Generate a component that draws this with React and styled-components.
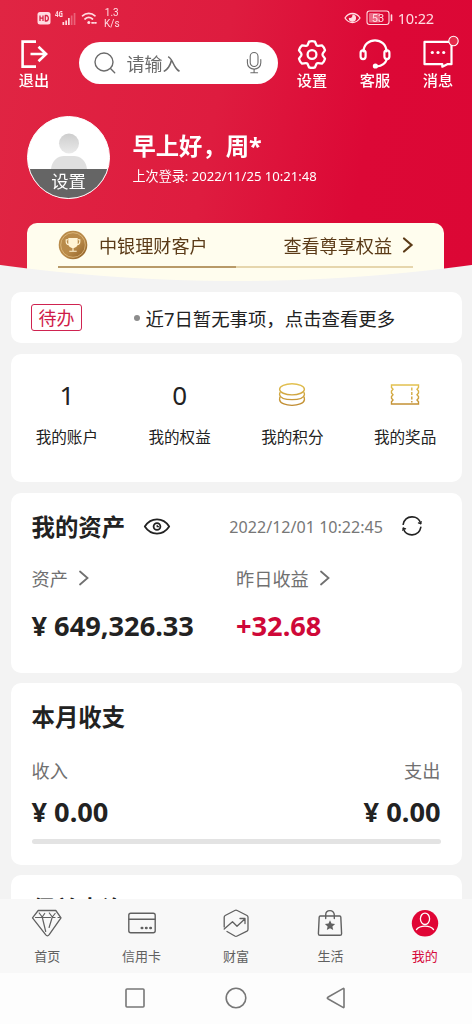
import React from "react";
import styled, { createGlobalStyle } from "styled-components";

const GlobalStyle = createGlobalStyle`
  * {
    box-sizing: border-box;
  }

  body {
    margin: 0;
    background-color: #f3f3f3;
    font-family: "Noto Sans", "Noto Sans CJK SC", sans-serif;
    color: #222;
  }

  svg {
    display: block;
    flex-shrink: 0;
    overflow: visible;
  }
`;

const Screen = styled.div`
  display: flex;
  flex-direction: column;
  width: 472px;
  height: 1024px;
  overflow: hidden;
  white-space: nowrap;
`;

const Header = styled.header`
  flex-shrink: 0;
  height: 281px;
  background: linear-gradient(100deg, #e02543 0%, #de1c3f 45%, #dc0836 75%, #dc0735 100%);
  mask-image: radial-gradient(circle 1740px at 50% -1459px, #000 1739.5px, transparent 1740.5px);
  color: #fff;
`;

const StatusBar = styled.div`
  display: flex;
  align-items: center;
  justify-content: space-between;
  height: 36px;
  padding: 0 38px 0 37px;
  color: #ffdce2;
`;

const StatusGroup = styled.div`
  display: flex;
  align-items: center;
  gap: ${({ $gap }) => $gap}px;
`;

const Speed = styled.div`
  margin-left: 2px;
  font-family: Roboto, sans-serif;
  font-size: 10px;
  line-height: 11.5px;
  text-align: center;
`;

const Clock = styled.span`
  font-size: 14.6px;
  letter-spacing: -0.2px;
`;

const Toolbar = styled.div`
  display: flex;
  height: 55px;
`;

const ToolButton = styled.div`
  display: flex;
  flex-direction: column;
  align-items: center;
  width: ${({ $width }) => $width || 63}px;
  padding-top: 1px;
  font-size: 15.2px;
  font-weight: 500;
  line-height: 22px;
`;

const SearchBox = styled.div`
  display: flex;
  align-items: center;
  width: 199px;
  height: 42px;
  margin: 6px 2.5px 0 11px;
  padding: 0 15px;
  border-radius: 21px;
  background-color: #fff;
  color: #6b6b6b;
  font-size: 18px;
`;

const Placeholder = styled.span`
  flex: 1;
  margin-left: 10.5px;
`;

const Profile = styled.div`
  display: flex;
  height: 83px;
  margin: 25px 0 24px 27px;
`;

const Avatar = styled.div`
  display: flex;
  flex-direction: column;
  align-items: center;
  justify-content: flex-end;
  width: 83px;
  height: 83px;
  overflow: hidden;
  border: 1px solid #fff;
  border-radius: 50%;
  background-color: #fff;
`;

const AvatarLabel = styled.div`
  width: 100%;
  height: 29px;
  background-color: #656565;
  font-size: 17.3px;
  line-height: 25px;
  text-align: center;
`;

const Greeting = styled.div`
  padding: 14px 0 0 22.5px;
`;

const Hello = styled.div`
  font-size: 23.3px;
  font-weight: 700;
  line-height: 32px;
`;

const LastLogin = styled.div`
  margin-top: 4px;
  font-size: 13.1px;
  line-height: 20px;
`;

const VipCard = styled.div`
  height: 70px;
  margin: 0 28px 0 27px;
  padding: 0 31px;
  border-radius: 10px 10px 0 0;
  background-color: #fffdee;
  color: #5b3b18;
  font-size: 18.1px;
`;

const VipRow = styled.div`
  display: flex;
  align-items: center;
  height: 43px;
`;

const VipName = styled.span`
  flex: 1;
  margin-left: 11px;
`;

const VipMore = styled.span`
  margin-right: 10px;
`;

const VipProgress = styled.div`
  height: 2px;
  background-color: #e6d6ad;
`;

const VipProgressFill = styled.div`
  width: 178px;
  height: 2px;
  background-color: #b89a68;
`;

const Content = styled.main`
  display: flex;
  flex: 1;
  flex-direction: column;
  gap: 10.5px;
  min-height: 0;
  overflow: hidden;
  padding: 11px 10.5px 0;
`;

const Card = styled.section`
  flex-shrink: 0;
  height: ${({ $height }) => $height}px;
  padding: ${({ $top }) => $top || 0}px 21px 0;
  border-radius: 10px;
  background-color: #fff;
`;

const TodoCard = styled(Card)`
  display: flex;
  align-items: center;
  font-size: 18.4px;
`;

const TodoTag = styled.span`
  width: 51px;
  height: 27px;
  margin: 0 51.5px 0 -0.5px;
  border: 1px solid #cf2350;
  border-radius: 3px;
  color: #cf1b4a;
  font-size: 18px;
  line-height: 26px;
  text-align: center;
`;

const Bullet = styled.span`
  width: 6px;
  height: 6px;
  margin-right: 6px;
  border-radius: 50%;
  background-color: #8c8c8c;
`;

const StatsCard = styled(Card)`
  display: grid;
  grid-template-columns: repeat(4, 1fr);
  padding: 21px 0 0;
`;

const Stat = styled.div`
  display: flex;
  flex-direction: column;
  align-items: center;
`;

const StatValue = styled.div`
  display: flex;
  align-items: center;
  height: 40px;
  font-size: 26px;
`;

const StatLabel = styled.div`
  margin-top: 11px;
  font-size: 15.6px;
  line-height: 22px;
`;

const TitleRow = styled.div`
  display: flex;
  align-items: center;
  height: 34px;
`;

const Title = styled.h2`
  margin: 0 18px 0 0;
  font-size: 23.4px;
  font-weight: 700;
  line-height: 34px;
`;

const UpdatedAt = styled.span`
  margin: 0 18.5px 0 auto;
  color: #777;
  font-size: 16.1px;
`;

const Refresh = styled.span`
  margin: 0 19px 1px 0;
`;

const Columns = styled.div`
  display: grid;
  grid-template-columns: 204.5px 1fr;
  row-gap: 17px;
  margin-top: 21px;
`;

const Label = styled.div`
  display: flex;
  align-items: center;
  gap: 10px;
  height: 26px;
  color: #707070;
  font-size: 18.2px;
`;

const Amount = styled.div`
  height: 36px;
  color: ${({ $gain }) => ($gain ? "#cf0838" : "#222")};
  font-size: 27.2px;
  font-weight: 700;
  line-height: 36px;
`;

const Between = styled.div`
  display: flex;
  justify-content: space-between;
  margin-top: ${({ $top }) => $top}px;
`;

const FlowBar = styled.div`
  height: 5px;
  margin-top: 9px;
  border-radius: 3px;
  background-color: #e3e3e3;
`;

const TabBar = styled.nav`
  display: grid;
  flex-shrink: 0;
  grid-template-columns: repeat(5, 1fr);
  height: 74px;
  background-color: #f8f8f8;
`;

const Tab = styled.div`
  display: flex;
  flex-direction: column;
  align-items: center;
  padding-top: 8px;
  color: ${({ $active }) => ($active ? "#d60a3b" : "#606060")};
  font-size: 13px;
  line-height: 20px;

  svg {
    margin-bottom: 7px;
  }
`;

const SystemNav = styled.div`
  display: flex;
  flex-shrink: 0;
  align-items: center;
  justify-content: center;
  gap: 78.5px;
  height: 51px;
  padding: 0 1px 2px 0;
  background-color: #fdfdfd;
  color: #777;
`;

const Icon = ({ width = 32, height = width, stroke = 2, children }) => (
    <svg
        width={width}
        height={height}
        viewBox={`0 0 ${width} ${height}`}
        fill="none"
        stroke="currentColor"
        strokeWidth={stroke}
        strokeLinecap="round"
        strokeLinejoin="round"
    >
        {children}
    </svg>
);

const Chevron = ({ stroke = 1.8 }) => (
    <Icon width={11} height={16} stroke={stroke}>
        <path d="M2 1.5 9.5 8 2 14.5" strokeLinejoin="miter" />
    </Icon>
);

const HdIcon = () => (
    <Icon width={14} height={14} stroke={1.3}>
        <rect x="0.5" y="1" width="13" height="12.5" rx="2.5" fill="currentColor" stroke="none" />
        <path
            d="M3 4.5v5.5M6 4.5v5.5M3 7.2h3M8.3 4.5v5.5h.8c3 0 3-5.5 0-5.5z"
            stroke="#d92345"
            strokeLinecap="butt"
        />
    </Icon>
);

const SignalIcon = () => (
    <svg width="22" height="16" viewBox="0 0 22 16" fill="currentColor">
        <text x="0" y="7" fontSize="8" fontWeight="700" textLength="8" lengthAdjust="spacingAndGlyphs">
            4G
        </text>
        <rect x="7.5" y="12" width="1.7" height="3" />
        <rect x="10.3" y="10.5" width="1.7" height="4.5" />
        <rect x="13" y="8" width="1.7" height="7" />
        <rect x="15.8" y="5.5" width="1.7" height="9.5" opacity="0.35" />
        <rect x="18.7" y="3" width="1.7" height="12" opacity="0.35" />
    </svg>
);

const WifiIcon = () => (
    <Icon width={17} height={16} stroke={1.7}>
        <path d="M1.5 5.8c3.5-3.2 9-3.2 12.5 0M4 9c2.3-2 5.2-2 7.5 0" />
        <circle cx="7.8" cy="12.5" r="1.5" fill="currentColor" stroke="none" />
        <path d="M11 12.8h1.5M14 12.8h1" />
    </Icon>
);

const EyeStatusIcon = () => (
    <Icon width={17} height={12} stroke={1.3}>
        <path d="M1 6c3.7-6 11.3-6 15 0-3.7 6-11.3 6-15 0z" />
        <path d="M9 3.2a3 3 0 1 1-3.6 3.3c1.9.8 3.9-.8 3.6-3.3z" fill="currentColor" />
    </Icon>
);

const BatteryIcon = () => (
    <Icon width={27} height={16} stroke={1.1}>
        <rect x="1" y="1" width="22" height="13.5" rx="2.5" />
        <rect x="3" y="3" width="11" height="9.5" rx="1" fill="currentColor" opacity="0.45" stroke="none" />
        <path d="M25.5 5v5.5" strokeWidth="1.6" />
        <text x="5.8" y="11.8" fontSize="11" fontFamily="Roboto" fill="currentColor" stroke="none">53</text>
    </Icon>
);

const LogoutIcon = () => (
    <Icon stroke={2.6}>
        <path d="M18 4.6H4.6v25H18M12.5 17H27.5M20.5 9.8l7.6 7.2-7.6 7.2" strokeLinecap="butt" strokeLinejoin="miter" />
    </Icon>
);

const GearIcon = () => (
    <Icon stroke={2.3}>
        <path d="M13 4.7Q16 3.6 19 4.7L20.5 8.2Q21.2 9 22.2 8.9L26 8.4Q28.3 10.3 29 13.3L26.8 16.4Q26.2 17.5 26.8 18.6L29 21.7Q28.3 24.8 26 26.6L22.2 26.1Q21.1 26 20.5 26.8L19 30.3Q16 31.4 13 30.3L11.5 26.8Q10.9 26 9.8 26.1L6 26.6Q3.7 24.8 3 21.7L5.2 18.6Q5.8 17.5 5.2 16.4L3 13.3Q3.7 10.3 6 8.4L9.8 8.9Q10.8 9 11.5 8.2Z" />
        <circle cx="16" cy="17.5" r="4.4" />
    </Icon>
);

const HeadsetIcon = () => (
    <Icon stroke={2.2}>
        <path d="M4.5 14.5C5 -.3 27 -.3 27.5 14.5" />
        <rect x="1.6" y="13.3" width="5" height="8.8" rx="2.5" />
        <rect x="25.4" y="13.3" width="5" height="8.8" rx="2.5" />
        <path d="M28 22c-1.5 4.5-5 7-10.3 7.5" />
        <circle cx="16.4" cy="29" r="2.6" fill="currentColor" stroke="none" />
    </Icon>
);

const MessageIcon = () => (
    <Icon width={38} height={32} stroke={2.2}>
        <path d="M5.5 4.8h27v22.4h-4.2l-5 2.5v-2.5H5.5z" />
        <circle cx="13.3" cy="15.5" r="1.6" fill="currentColor" stroke="none" />
        <circle cx="19" cy="15.5" r="1.6" fill="currentColor" stroke="none" />
        <circle cx="24.7" cy="15.5" r="1.6" fill="currentColor" stroke="none" />
        <circle cx="34.5" cy="4" r="4.7" fill="#e52b4b" strokeWidth="1.1" />
    </Icon>
);

const SearchIcon = () => (
    <Icon width={22} height={22} stroke={1.4}>
        <circle cx="10" cy="10" r="9" />
        <path d="m16.5 16.5 4.2 4.2" />
    </Icon>
);

const MicIcon = () => (
    <Icon width={18} height={24} stroke={1.1}>
        <rect x="5.2" y="1.5" width="7.8" height="14" rx="3.9" />
        <path d="M2.4 8.5v3.2c0 8.6 13.4 8.6 13.4 0V8.5M9.1 18.2v3.6M5.8 21.8h6.8" />
    </Icon>
);

const PersonAvatar = () => (
    <svg width="40" height="36" viewBox="0 0 40 36">
        <defs>
            <linearGradient id="person" x1="0" y1="0" x2="0" y2="1">
                <stop offset="0" stopColor="#cdcdcd" />
                <stop offset="1" stopColor="#eaeaea" />
            </linearGradient>
        </defs>
        <circle cx="20" cy="10.5" r="10" fill="url(#person)" />
        <path d="M2 36c1-9 7-13 13-13h10c6 0 12 4 13 13z" fill="#dfdfdf" />
    </svg>
);

const MedalIcon = () => (
    <svg width="30" height="30" viewBox="0 0 30 30">
        <defs>
            <linearGradient id="medal" x1="0" y1="0" x2="1" y2="1">
                <stop offset="0" stopColor="#b88b4a" />
                <stop offset="0.55" stopColor="#b98a49" />
                <stop offset="1" stopColor="#8a5a22" />
            </linearGradient>
        </defs>
        <circle cx="15" cy="15" r="14.3" fill="url(#medal)" />
        <circle cx="15" cy="15" r="12.3" fill="none" stroke="#dfbd83" strokeWidth="0.8" />
        <path d="M10.3 8h9.4v5.5c0 6-9.4 6-9.4 0z" fill="#fff3d4" />
        <path
            d="M10 9.7H8.2v2c0 1.8 1 2.8 2.8 3M20 9.7h1.8v2c0 1.8-1 2.8-2.8 3M15 17v3.8M11.3 21.2h7.4"
            fill="none"
            stroke="#fff3d4"
            strokeWidth="1.1"
        />
    </svg>
);

const CoinsIcon = () => (
    <svg width="28" height="26" viewBox="0 0 28 26" fill="none" stroke="url(#gold)" strokeWidth="1.4">
        <defs>
            <linearGradient id="gold" gradientUnits="userSpaceOnUse" x1="0" y1="0" x2="0" y2="26">
                <stop offset="0" stopColor="#e5c552" />
                <stop offset="1" stopColor="#bb842d" />
            </linearGradient>
        </defs>
        <ellipse cx="14" cy="7.3" rx="12.4" ry="5.6" />
        <path d="M2.4 10c-.8.8-.9 1.8-.8 2.8 1.4 6.4 23.4 6.4 24.8 0 .1-1 0-2-.8-2.8" />
        <path d="M2.4 14.6c-.8.8-.9 2-.8 3.2 1.4 7.4 23.4 7.4 24.8 0 .1-1.2 0-2.4-.8-3.2" />
    </svg>
);

const TicketIcon = () => (
    <svg width="30" height="24" viewBox="0 0 30 24" fill="none" stroke="url(#gold)" strokeWidth="1.4">
        <path d="M1.5 2h27v2.5l-1.5 1.8 1.5 1.8v1.8L27 11.7l1.5 1.8v1.8L27 17l1.5 1.8V21h-27v-2.2L3 17l-1.5-1.7v-1.8L3 11.7 1.5 9.9V8.1L3 6.3 1.5 4.5z" />
        <path d="M21.8 4.5v15" strokeDasharray="3 1.5" />
    </svg>
);

const EyeIcon = () => (
    <Icon width={28} height={18} stroke={1.8}>
        <path d="M1.8 8.5C8-.9 20-.9 26.2 8.5 20 17.9 8 17.9 1.8 8.5z" />
        <circle cx="14" cy="8.5" r="3.4" />
        <path d="M14.2 7.3v1.4h1.3" strokeWidth="1.2" />
    </Icon>
);

const RefreshIcon = () => (
    <Icon width={20} height={20} stroke={1.6}>
        <path d="M1.2 8.3C3.2-1.5 16.6-1.5 18.6 7.4M18.8 11.4C16.8 21.2 3.4 21.2 1.4 12.3" />
        <path d="M16.4 6.9l2.3.9.5-2.3M3.6 12.9l-2.3-.9-.5 2.3" strokeWidth="1.2" />
    </Icon>
);

const DiamondIcon = () => (
    <Icon stroke={1.3}>
        <path d="M7.2 3.5h17.6l5.2 7.3L18.2 27.7q-1.8 2.2-3.6 0L1.5 10.8z" />
        <path d="M4.5 10.5h15M22 10.5h2M27 10.5h1.5M8.2 6l3 4 3.5 14.5M11.2 10l2.5-3.5M18.3 6l3 4-3.2 10.5M21.3 10l2.8-3.5" strokeWidth="1.2" />
    </Icon>
);

const CreditCardIcon = () => (
    <Icon stroke={1.4}>
        <rect x="2.8" y="6.3" width="26.4" height="19.5" rx="2" />
        <path d="M3 12.2h26" />
        <path d="M15.8 21h.4M20.1 21h.4M24.4 21h.4" strokeWidth="2.6" />
    </Icon>
);

const WealthIcon = () => (
    <Icon stroke={1.3}>
        <path d="M4.2 20V10.3q0-1.2 1-1.8L14.8 3.5q1.2-.6 2.4 0L27 8.5q1 .6 1 1.8v12q0 1.2-1 1.8L17.2 29q-1.2.6-2.4 0L7 24.5" />
        <path d="m4.2 22 8.3-7.2 4.5 4.5L24.8 12M20 11.5h5v5" />
    </Icon>
);

const BagIcon = () => (
    <Icon stroke={1.4}>
        <path d="M6.3 9h19.4q1 0 1.1 1l.8 16.7q0 1.6-1.6 1.6H6q-1.6 0-1.6-1.6L5.2 10q.1-1 1.1-1zM11.7 11.5V8c0-5.8 8.6-5.8 8.6 0v3.5" />
        <path d="m16 13.3 1.5 3.3 3.6.4-2.7 2.4.8 3.6-3.2-1.8-3.2 1.8.8-3.6-2.7-2.4 3.6-.4z" fill="currentColor" stroke="none" />
    </Icon>
);

const MineIcon = () => (
    <Icon stroke={1.3}>
        <circle cx="16" cy="16.3" r="13.2" fill="#e00636" stroke="none" />
        <ellipse cx="16" cy="11.8" rx="4.6" ry="5.7" stroke="#fff" />
        <path d="M7.5 22.5c3.4-4.4 13.6-4.4 17 0" stroke="#fff" />
    </Icon>
);

const tabs = [
    { label: "首页", icon: <DiamondIcon /> },
    { label: "信用卡", icon: <CreditCardIcon /> },
    { label: "财富", icon: <WealthIcon /> },
    { label: "生活", icon: <BagIcon /> },
    { label: "我的", icon: <MineIcon />, active: true },
];

const stats = [
    { label: "我的账户", value: "1" },
    { label: "我的权益", value: "0" },
    { label: "我的积分", value: <CoinsIcon /> },
    { label: "我的奖品", value: <TicketIcon /> },
];

const App = () => {
    return (
        <Screen>
            <GlobalStyle />
            <Header>
                <StatusBar>
                    <StatusGroup $gap={4}>
                        <HdIcon />
                        <SignalIcon />
                        <WifiIcon />
                        <Speed>
                            1.3
                            <br />
                            K/s
                        </Speed>
                    </StatusGroup>
                    <StatusGroup $gap={5}>
                        <EyeStatusIcon />
                        <BatteryIcon />
                        <Clock>10:22</Clock>
                    </StatusGroup>
                </StatusBar>
                <Toolbar>
                    <ToolButton $width={68}>
                        <LogoutIcon />
                        退出
                    </ToolButton>
                    <SearchBox>
                        <SearchIcon />
                        <Placeholder>请输入</Placeholder>
                        <MicIcon />
                    </SearchBox>
                    <ToolButton>
                        <GearIcon />
                        设置
                    </ToolButton>
                    <ToolButton>
                        <HeadsetIcon />
                        客服
                    </ToolButton>
                    <ToolButton>
                        <MessageIcon />
                        消息
                    </ToolButton>
                </Toolbar>
                <Profile>
                    <Avatar>
                        <PersonAvatar />
                        <AvatarLabel>设置</AvatarLabel>
                    </Avatar>
                    <Greeting>
                        <Hello>早上好，周*</Hello>
                        <LastLogin>上次登录: 2022/11/25 10:21:48</LastLogin>
                    </Greeting>
                </Profile>
                <VipCard>
                    <VipRow>
                        <MedalIcon />
                        <VipName>中银理财客户</VipName>
                        <VipMore>查看尊享权益</VipMore>
                        <Chevron stroke={2.2} />
                    </VipRow>
                    <VipProgress>
                        <VipProgressFill />
                    </VipProgress>
                </VipCard>
            </Header>

            <Content>
                <TodoCard $height={51}>
                    <TodoTag>待办</TodoTag>
                    <Bullet />
                    近7日暂无事项，点击查看更多
                </TodoCard>

                <StatsCard $height={128.5}>
                    {stats.map((item) => (
                        <Stat key={item.label}>
                            <StatValue>{item.value}</StatValue>
                            <StatLabel>{item.label}</StatLabel>
                        </Stat>
                    ))}
                </StatsCard>

                <Card $height={180} $top={17}>
                    <TitleRow>
                        <Title>我的资产</Title>
                        <EyeIcon />
                        <UpdatedAt>2022/12/01 10:22:45</UpdatedAt>
                        <Refresh>
                            <RefreshIcon />
                        </Refresh>
                    </TitleRow>
                    <Columns>
                        <Label>
                            资产 <Chevron />
                        </Label>
                        <Label>
                            昨日收益 <Chevron />
                        </Label>
                        <Amount>¥ 649,326.33</Amount>
                        <Amount $gain>+32.68</Amount>
                    </Columns>
                </Card>

                <Card $height={181.5} $top={17}>
                    <Title>本月收支</Title>
                    <Between $top={23}>
                        <Label>收入</Label>
                        <Label>支出</Label>
                    </Between>
                    <Between $top={11}>
                        <Amount>¥ 0.00</Amount>
                        <Amount>¥ 0.00</Amount>
                    </Between>
                    <FlowBar />
                </Card>

                <Card $height={120} $top={17}>
                    <Title>保单查询</Title>
                </Card>
            </Content>

            <TabBar>
                {tabs.map((tab) => (
                    <Tab key={tab.label} $active={tab.active}>
                        {tab.icon}
                        {tab.label}
                    </Tab>
                ))}
            </TabBar>
            <SystemNav>
                <Icon width={22} stroke={1.6}>
                    <rect x="2" y="2" width="18" height="18" rx="1" />
                </Icon>
                <Icon width={22} stroke={1.6}>
                    <circle cx="11" cy="11" r="9.8" />
                </Icon>
                <Icon width={22} stroke={1.6}>
                    <path d="M19 2v18q0 1-1 .4L2.8 11.7q-1-.7 0-1.4L18 1.6q1-.6 1 .4z" />
                </Icon>
            </SystemNav>
        </Screen>
    );
};

export default App;
